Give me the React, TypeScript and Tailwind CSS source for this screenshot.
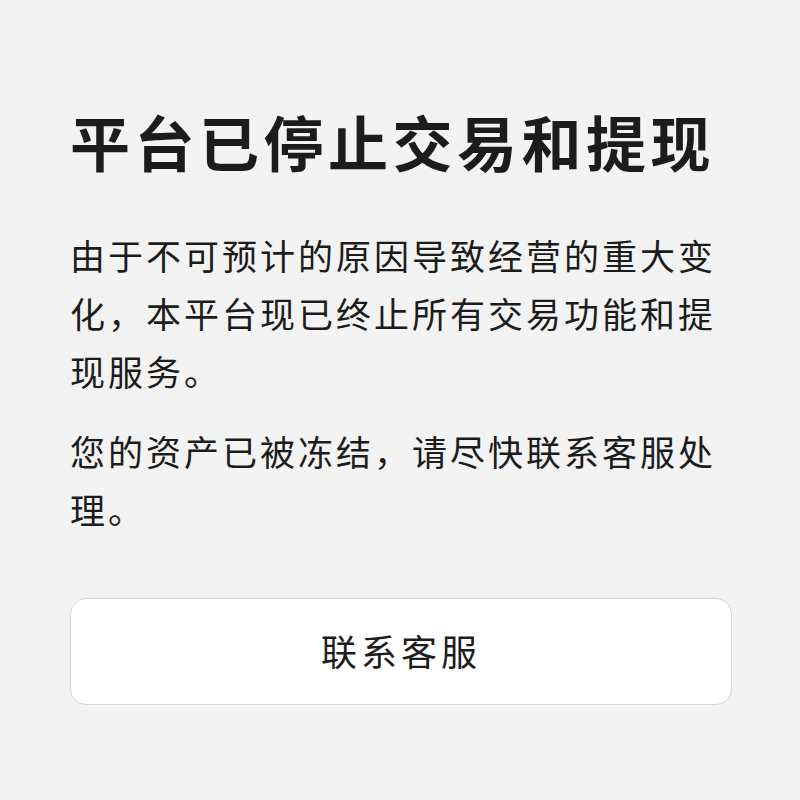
export default function App() {
  return (
    <div
      className="w-[800px] h-[800px] bg-[#f3f3f3] px-[70px] pt-[104px] text-[#1c1c1c]"
      style={{ fontFamily: '"Noto Sans CJK SC", "Noto Sans", sans-serif' }}
    >
      <h1 className="text-[60px] leading-[74px] font-bold tracking-[4.5px] whitespace-nowrap">
        平台已停止交易和提现
      </h1>
      <p className="mt-[48px] text-[35px] leading-[58px] tracking-[3px]">
        由于不可预计的原因导致经营的重大变化，本平台现已终止所有交易功能和提现服务。
      </p>
      <p className="mt-[22px] text-[35px] leading-[58px] tracking-[3px]">
        您的资产已被冻结，请尽快联系客服处理。
      </p>
      <button className="mt-[60px] w-[662px] h-[107px] pb-[4px] rounded-[16px] bg-white border border-[#d8d8d8] text-[36px] tracking-[4px] text-[#1c1c1c]">
        联系客服
      </button>
    </div>
  );
}
